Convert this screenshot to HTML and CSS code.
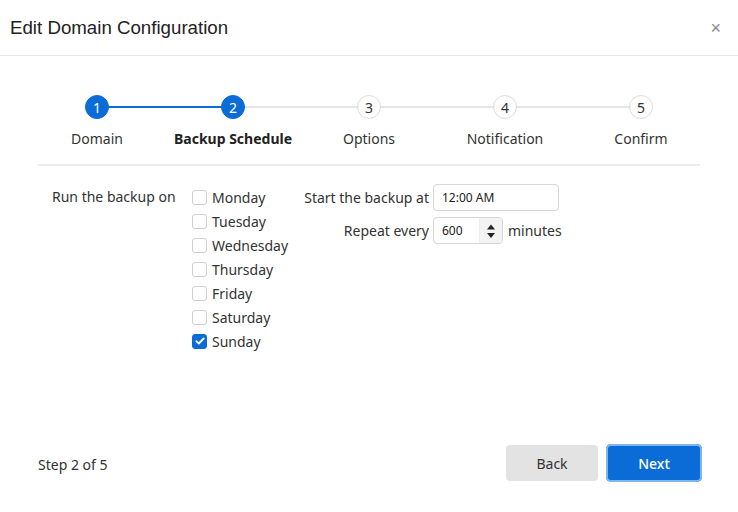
FILE: index.html
```html
<!DOCTYPE html>
<html>
<head>
<meta charset="utf-8">
<link rel="stylesheet" href="styles.css">
</head>
<body>
<div class="dialog">
  <div class="header">
    <div class="title">Edit Domain Configuration</div>
    <div class="close">×</div>
  </div>
  <div class="body">
    <div class="stepper">
      <div class="step done"><div class="track"><span class="line right active"></span><span class="circle">1</span></div><div class="label">Domain</div></div>
      <div class="step current"><div class="track"><span class="line left active"></span><span class="circle">2</span><span class="line right"></span></div><div class="label">Backup Schedule</div></div>
      <div class="step"><div class="track"><span class="line left"></span><span class="circle">3</span><span class="line right"></span></div><div class="label">Options</div></div>
      <div class="step"><div class="track"><span class="line left"></span><span class="circle">4</span><span class="line right"></span></div><div class="label">Notification</div></div>
      <div class="step"><div class="track"><span class="line left"></span><span class="circle">5</span></div><div class="label">Confirm</div></div>
    </div>
    <div class="divider"></div>
    <div class="form">
      <div class="days-label">Run the backup on</div>
      <div class="days">
        <label class="day"><span class="box"></span>Monday</label>
        <label class="day"><span class="box"></span>Tuesday</label>
        <label class="day"><span class="box"></span>Wednesday</label>
        <label class="day"><span class="box"></span>Thursday</label>
        <label class="day"><span class="box"></span>Friday</label>
        <label class="day"><span class="box"></span>Saturday</label>
        <label class="day"><span class="box checked"><svg width="10" height="8" viewBox="0 0 10 8"><path d="M1.3 4.2 L3.8 6.5 L8.7 1.5" fill="none" stroke="#fff" stroke-width="1.8" stroke-linecap="round" stroke-linejoin="round"/></svg></span>Sunday</label>
      </div>
      <div class="times">
        <div class="trow"><span class="tlabel">Start the backup at</span><span class="input time">12:00 AM</span></div>
        <div class="trow"><span class="tlabel">Repeat every</span><span class="input num"><span class="val">600</span><span class="spin"><svg width="10" height="18" viewBox="0 0 10 18"><path d="M1 7.5 L5 2.5 L9 7.5 Z" fill="#222"/><path d="M1 11 L5 16 L9 11 Z" fill="#222"/></svg></span></span><span class="unit">minutes</span></div>
      </div>
    </div>
  </div>
  <div class="footer">
    <div class="stepinfo">Step 2 of 5</div>
    <div class="buttons">
      <button class="btn back">Back</button>
      <button class="btn next">Next</button>
    </div>
  </div>
</div>
</body>
</html>
```
FILE: styles.css
```css
html, body { margin: 0; padding: 0; background: #fff; }
body { font-family: "Noto Sans", "Open Sans", sans-serif; color: #333; font-size: 14px; }
.dialog { width: 738px; height: 512px; display: flex; flex-direction: column; }
.header { height: 56px; border-bottom: 1px solid #e8e8e8; display: flex; align-items: center; justify-content: space-between; padding: 0 17px 0 10px; box-sizing: border-box; }
.title { font-family: "Liberation Sans", Arial, sans-serif; font-size: 18.7px; color: #222; margin-top: 0; }
.close { font-family: "Liberation Sans", Arial, sans-serif; font-size: 18px; color: #888; margin-top: 2px; }
.body { flex: 1; padding: 38px 38px 0 38px; }
.stepper { display: grid; grid-template-columns: repeat(5, 136px); margin-left: -9px; }
.step { display: flex; flex-direction: column; align-items: center; }
.track { position: relative; width: 100%; height: 26px; display: flex; justify-content: center; align-items: center; }
.line { position: absolute; top: 12px; height: 2px; background: #e6e6e6; width: 50%; }
.line.left { left: 0; }
.line.right { right: 0; }
.line.active { background: #0b6cd8; }
.circle { position: relative; z-index: 1; width: 22px; height: 22px; border-radius: 50%; border: 1px solid #dcdcdc; background: #fff; display: flex; align-items: center; justify-content: center; font-size: 14px; color: #333; }
.done .circle, .current .circle { background: #0b6cd8; border-color: #0b6cd8; color: #fff; }
.label { margin-top: 9px; font-size: 14px; color: #333; line-height: 20px; }
.current .label { font-weight: 700; color: #222; }
.divider { height: 2px; background: #ececec; margin-top: 15px; }
.form { display: flex; margin-top: 19px; padding-left: 14px; }
.days-label { line-height: 24px; width: 140px; }
.days { display: flex; flex-direction: column; width: 111px; }
.day { display: flex; align-items: center; height: 24px; }
.box { width: 13px; height: 13px; border: 1px solid #cfcfcf; border-radius: 3px; margin-right: 5px; display: flex; align-items: center; justify-content: center; box-sizing: content-box; }
.box.checked { background: #0b6cd8; border-color: #0b6cd8; }
.times { display: flex; flex-direction: column; gap: 6px; margin-top: -1px; }
.trow { display: flex; align-items: center; height: 27px; }
.tlabel { width: 126px; text-align: right; margin-right: 4px; white-space: nowrap; }
.input { height: 27px; box-sizing: border-box; border: 1px solid #d6d6d6; border-radius: 4px; display: flex; align-items: center; font-size: 12px; color: #222; padding-left: 8px; }
.input.time { width: 126px; }
.input.num { width: 70px; justify-content: space-between; padding-right: 0; }
.spin { width: 22px; height: 100%; display: flex; align-items: center; justify-content: center; border-left: 1px solid #eee; background: #f3f3f3; border-radius: 0 3px 3px 0; }
.unit { margin-left: 5px; }
.footer { height: 94px; display: flex; align-items: flex-start; justify-content: space-between; padding: 0 36px 0 38px; box-sizing: border-box; }
.stepinfo { margin-top: 37px; line-height: 20px; }
.buttons { display: flex; gap: 8px; margin-top: 26px; }
.btn { font-family: "Noto Sans", "Open Sans", sans-serif; font-size: 14px; border-radius: 4px; border: none; height: 36px; cursor: pointer; }
.btn.back { width: 92px; background: #e3e3e3; color: #333; margin-top: 1px; }
.btn.next { width: 96px; height: 38px; border-radius: 5px; background: #0b6cd8; color: #fff; font-weight: 500; box-shadow: inset 0 0 0 2px #80b6ee; }
```
